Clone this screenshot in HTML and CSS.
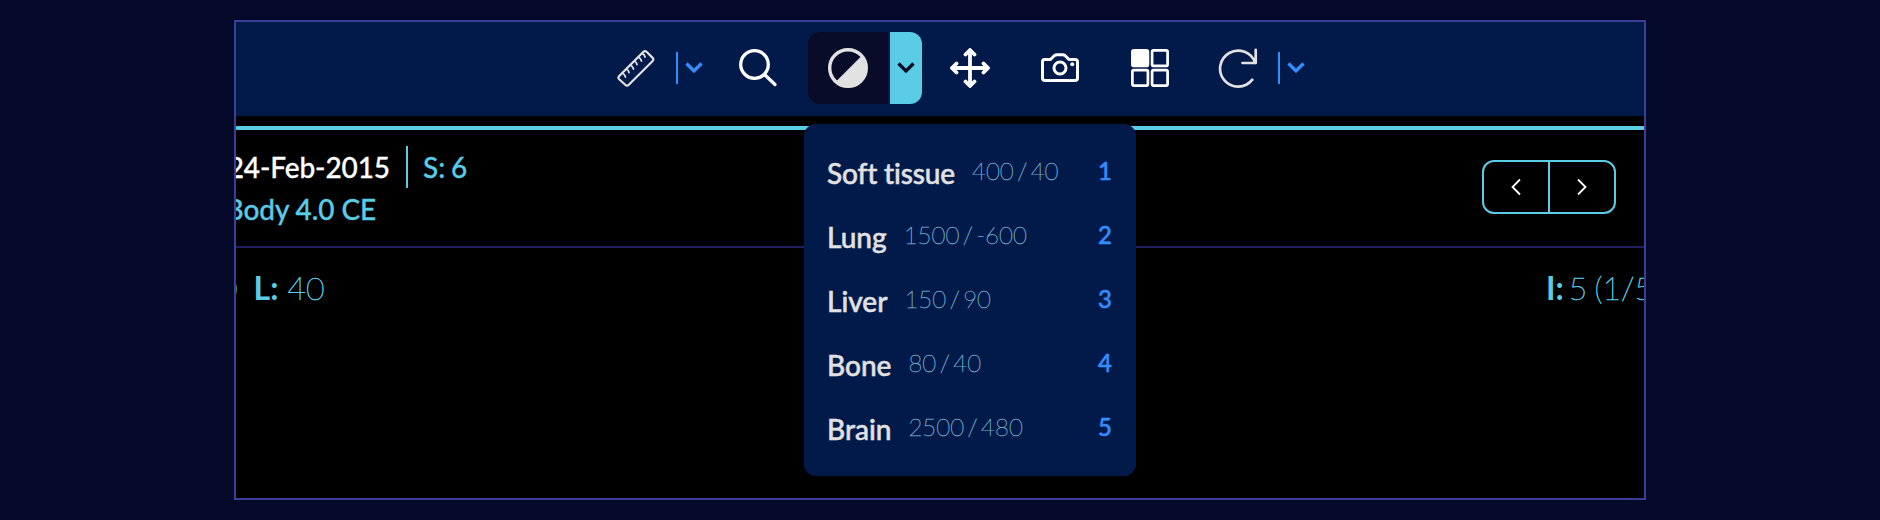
FILE: index.html
```html
<!DOCTYPE html>
<html lang="en">
<head>
<meta charset="utf-8">
<title>Viewer</title>
<link rel="stylesheet" href="styles.css">
</head>
<body>
<div class="frame">
  <header class="toolbar">
    <svg class="icon" viewBox="0 0 40 40" fill="none" stroke="#e1e1e1" stroke-width="2.200" stroke-linejoin="round" stroke-linecap="round">
      <path d="M3.200 28 27.200 4Q29 2.200 30.800 4L36.400 9.600Q38.200 11.400 36.400 13.200L12.800 36.800Q11 38.600 9.200 36.800L3.200 31.200Q1.600 29.600 3.200 28Z"/>
      <path stroke-width="1.800" d="M6.800 25.500Q8.500 26 9.500 29M10.800 21.500Q12.500 22 13 24.500M14.800 17.500Q16.500 18 17.500 21M18.800 13.500Q20.500 14 21 16.500M22.800 9.500Q24.500 10 25.500 13M26.600 5.700Q28.500 6.500 29 9"/>
    </svg>
    <span class="split"></span>
    <svg class="chevron blue" viewBox="0 0 20 20"><path d="M2.500 5.500 10 13 17.500 5.500"/></svg>
    <svg class="icon search" viewBox="0 0 40 40" fill="none" stroke="#fff" stroke-width="3.300" stroke-linecap="round"><circle cx="16.500" cy="16.500" r="13.800"/><path d="M27 27 37 36.500"/></svg>
    <div class="active-tool">
      <div class="active-main"><svg class="icon" viewBox="0 0 40 40"><circle cx="20" cy="20" r="18.300" fill="none" stroke="#e1e1e1" stroke-width="3.400"/><path d="M33 8.500A17.300 17.300 0 0 1 8.500 33Z" fill="#e1e1e1"/></svg></div>
      <div class="active-more"><svg class="chevron dark" viewBox="0 0 20 20"><path d="M2.500 5.500 10 13 17.500 5.500"/></svg></div>
    </div>
    <svg class="icon move" viewBox="0 0 40 40" fill="none" stroke="#fff" stroke-width="3.800" stroke-linecap="round" stroke-linejoin="round"><path d="M20 2.500V37.500M2.500 20H37.500M15.500 6.500 20 2 24.500 6.500M15.500 33.500 20 38 24.500 33.500M6.500 15.500 2 20 6.500 24.500M33.500 15.500 38 20 33.500 24.500"/></svg>
    <svg class="icon camera" viewBox="0 0 40 40" fill="none" stroke="#fff" stroke-width="3" stroke-linejoin="round"><path d="M4.500 11.500H10.500L14.500 7.500Q15.500 6.800 17 6.800H22.500Q24 6.800 25 7.500L29 11.500H35Q37.500 11.500 37.500 14V30Q37.500 32.500 35 32.500H5Q2.500 32.500 2.500 30V14Q2.500 11.500 4.500 11.500Z"/><circle cx="20" cy="20" r="6"/><circle cx="32.300" cy="16.300" r="2" fill="#fff" stroke="none"/></svg>
    <svg class="icon grid" viewBox="0 0 40 40" fill="none" stroke="#fff" stroke-width="2.700"><rect x="2.400" y="2.400" width="15.500" height="15.500" rx="1.500" fill="#fff"/><rect x="22.100" y="2.400" width="15.500" height="15.500" rx="1.500"/><rect x="2.400" y="22.100" width="15.500" height="15.500" rx="1.500"/><rect x="22.100" y="22.100" width="15.500" height="15.500" rx="1.500"/></svg>
    <svg class="icon rotate" viewBox="0 0 40 40" fill="none" stroke="#e1e1e1" stroke-width="2.700" stroke-linecap="round" stroke-linejoin="round"><path d="M34.300 31.700A18 18 0 1 1 37.200 15M37.700 1.800V15H24.500"/></svg>
    <span class="split"></span>
    <svg class="chevron blue" viewBox="0 0 20 20"><path d="M2.500 5.500 10 13 17.500 5.500"/></svg>
  </header>
  <main class="viewport">
    <div class="study">
      <div class="study-info">
        <div class="study-line"><span class="date">24-Feb-2015</span><span class="series">S: 6</span></div>
        <div class="description">Body 4.0 CE</div>
      </div>
      <div class="pager">
        <div class="page prev"><svg viewBox="0 0 16 20"><path d="M12 2.500 4.500 10 12 17.500"/></svg></div>
        <div class="page next"><svg viewBox="0 0 16 20"><path d="M4 2.500 11.500 10 4 17.500"/></svg></div>
      </div>
    </div>
    <div class="overlay">
      <div class="level"><span class="thin window">0</span><b>L:</b><span class="thin">40</span></div>
      <div class="instance"><b>I:</b><span class="thin">5 (1/5</span></div>
    </div>
  </main>
  <div class="menu">
    <div class="preset"><span class="name">Soft tissue</span><span class="range">400 / 40</span><span class="key">1</span></div>
    <div class="preset"><span class="name">Lung</span><span class="range">1500 / -600</span><span class="key">2</span></div>
    <div class="preset"><span class="name">Liver</span><span class="range">150 / 90</span><span class="key">3</span></div>
    <div class="preset"><span class="name">Bone</span><span class="range">80 / 40</span><span class="key">4</span></div>
    <div class="preset"><span class="name">Brain</span><span class="range">2500 / 480</span><span class="key">5</span></div>
  </div>
</div>
</body>
</html>
```
FILE: styles.css
```css
* { box-sizing: border-box; }
body { margin: 0; padding: 20px 234px; height: 520px; background: #060a2a; font-family: Lato, sans-serif; font-variant-ligatures: none; overflow: hidden; }
svg { display: block; flex: none; }
.frame { position: relative; height: 480px; border: 2px solid #3a3f99; background: #000; overflow: hidden; }
.toolbar { display: flex; align-items: center; height: 94px; padding: 0 0 2px 380px; background: #021a4a; }
.icon { width: 40px; height: 40px; }
.split { flex: none; width: 2px; height: 32px; margin: 0 6px 0 20px; background: #348cfd; }
.chevron { width: 20px; height: 20px; fill: none; stroke-width: 3.3px; }
.blue { stroke: #348cfd; }
.dark { stroke: #090c29; }
.search { margin: 0 30px 0 34px; }
.active-tool { display: flex; gap: 2px; height: 72px; }
.active-main, .active-more { display: flex; align-items: center; justify-content: center; }
.active-main { width: 80px; background: #090c29; border-radius: 12px 0 0 12px; }
.active-more { width: 32px; background: #5acce6; border-radius: 0 12px 12px 0; }
.move { margin-left: 28px; }
.camera, .grid { margin-left: 50px; }
.rotate { margin-left: 48px; }
.viewport { margin-top: 10px; border-top: 4px solid #5acce6; color: #5acce6; }
.study { display: flex; justify-content: space-between; height: 118px; padding: 16px 28px 0 0; border-bottom: 2px solid #20205f; font-size: 28px; font-weight: 500; line-height: 42px; letter-spacing: -0.1px; white-space: nowrap; -webkit-text-stroke: 0.3px; }
.study-line { display: flex; }
.date { display: flex; justify-content: flex-end; width: 154px; color: #fff; }
.series { margin-left: 16px; padding-left: 15px; border-left: 2px solid #5acce6; word-spacing: -1px; }
.description { display: flex; justify-content: flex-end; width: 140px; }
.pager { display: flex; width: 134px; height: 54px; margin-top: 14px; border: 2px solid #5acce6; border-radius: 12px; }
.page { display: flex; align-items: center; justify-content: center; width: 64px; }
.next { width: 66px; border-left: 2px solid #5acce6; }
.page svg { width: 16px; height: 20px; fill: none; stroke: #fff; stroke-width: 1.8px; }
.overlay { display: flex; justify-content: space-between; padding-top: 19px; font-size: 32px; line-height: 42px; white-space: nowrap; }
.thin { font-weight: 100; -webkit-text-stroke: 0.65px; word-spacing: -2px; }
.level { display: flex; margin-left: -17px; }
.window { margin-right: 16px; }
.level b { margin-right: 9px; }
.instance { display: flex; width: 98px; }
.instance b { margin-right: 5px; }
.menu { position: absolute; left: 568px; top: 102px; width: 332px; height: 352px; padding: 17px 24px; border-radius: 12px; background: #021a4a; }
.preset { display: flex; align-items: center; height: 64px; white-space: nowrap; }
.name { margin-left: -1px; color: #e1e1e1; font-size: 28px; font-weight: 500; -webkit-text-stroke: 0.5px; }
.preset:first-child .name { letter-spacing: -0.15px; }
.range { margin: -6px 0 0 17px; color: #6fa5c4; font-size: 24px; font-weight: 100; word-spacing: -3.4px; -webkit-text-stroke: 0.5px; }
.key { margin: -6px 0 0 auto; color: #348cfd; font-size: 24px; font-weight: 500; -webkit-text-stroke: 0.5px; }
```
